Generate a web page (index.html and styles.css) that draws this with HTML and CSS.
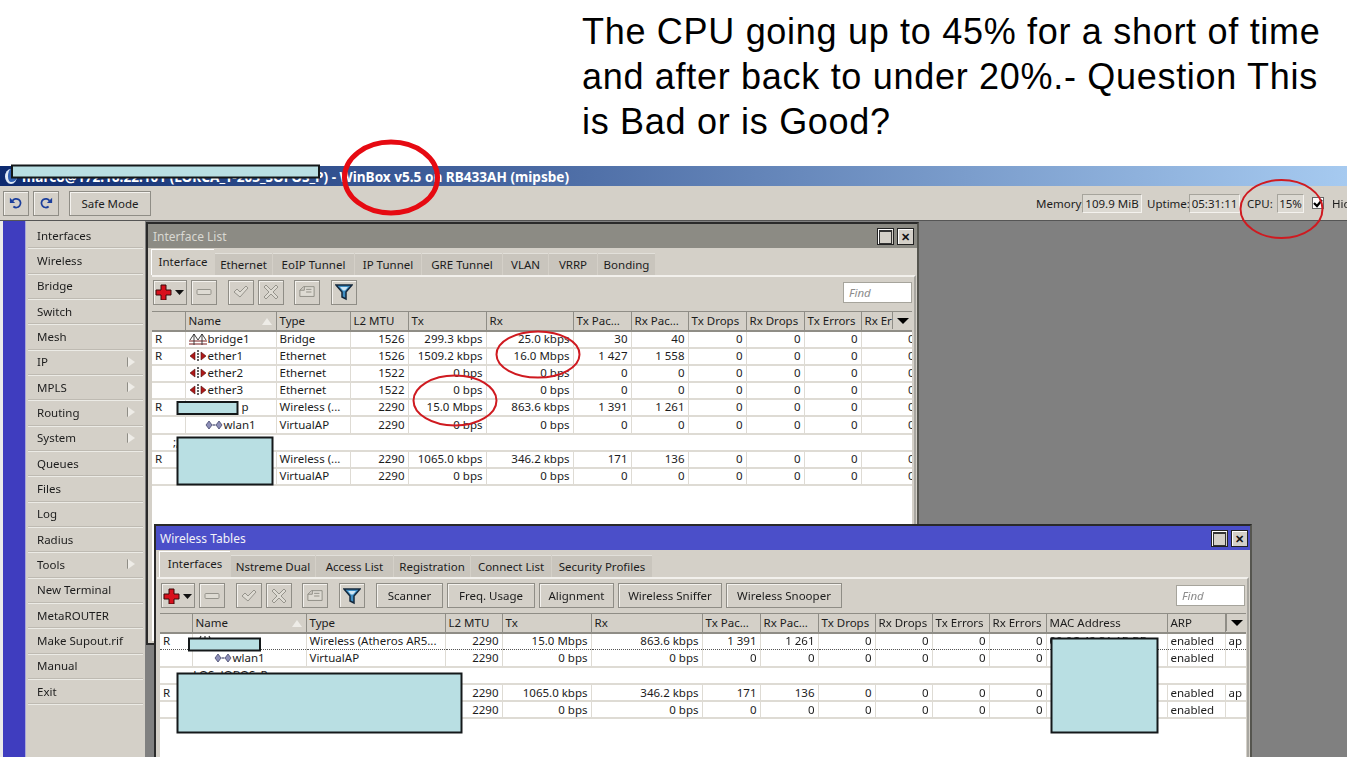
FILE: index.html
```html
<!DOCTYPE html>
<html lang="en">
<head>
    <meta charset="UTF-8">
    <title>WinBox v5.5</title>
    <link rel="stylesheet" href="styles.css">
</head>
<body>
    <svg class="defs" width="0" height="0">
        <symbol id="i-add" viewBox="0 0 30 16">
            <path d="M6 1h5v5h5v5h-5v5H6v-5H1V6h5z" fill="#d8101c" stroke="#3a0a0a" stroke-width="1"/>
            <path d="M20 6h9l-4.500 5z" fill="#111"/>
        </symbol>
        <symbol id="i-minus" viewBox="0 0 16 16">
            <rect x="1" y="5.500" width="14" height="5" rx="1" fill="#dedbd3" stroke="#96948c"/>
        </symbol>
        <symbol id="i-check" viewBox="0 0 16 16">
            <path d="M1 8l3-3 3 3 6-6 2 2-8 9z" fill="#dedbd3" stroke="#96948c"/>
        </symbol>
        <symbol id="i-x" viewBox="0 0 16 16">
            <path d="M3 1l5 5 5-5 2 2-5 5 5 5-2 2-5-5-5 5-2-2 5-5-5-5z" fill="#dedbd3" stroke="#96948c"/>
        </symbol>
        <symbol id="i-note" viewBox="0 0 18 16">
            <path d="M1 6l4-4h12v11H1zM1 6h5V2M8 5h6M8 8h6" fill="#dedbd3" stroke="#8a8880"/>
        </symbol>
        <symbol id="i-filter" viewBox="0 0 18 18">
            <path d="M1 2h16l-6 7v7l-4-2V9z" fill="#3f8fc4" stroke="#14283c" stroke-width="1.500"/>
            <path d="M5 4h8l-3 3.500H8z" fill="#cfe6f5"/>
        </symbol>
        <symbol id="i-undo" viewBox="0 0 16 16">
            <path d="M4 5.500a5 5 0 1 1 1 6.500" fill="none" stroke="#1c3f9c" stroke-width="2"/>
            <path d="M1 2v6h6z" fill="#1c3f9c"/>
        </symbol>
        <symbol id="i-redo" viewBox="0 0 16 16">
            <path d="M12 5.500a5 5 0 1 0-1 6.500" fill="none" stroke="#1c3f9c" stroke-width="2"/>
            <path d="M15 2v6H9z" fill="#1c3f9c"/>
        </symbol>
        <symbol id="i-bridge" viewBox="0 0 18 12">
            <path d="M0 8h18M0 11h18" fill="none" stroke="#7a1c1c" stroke-width="1.200"/>
            <path d="M5 1v11M13 1v11M1 7l4-6 4 6 4-6 4 6" fill="none" stroke="#2a2a2a" stroke-width=".9"/>
        </symbol>
        <symbol id="i-ether" viewBox="0 0 18 12">
            <path d="M6 2v8L1 6zM12 2v8l5-4z" fill="#b01818" stroke="#4a1010" stroke-width=".6"/>
            <path d="M9 0v12" stroke="#222" stroke-width="1.400" stroke-dasharray="2 1"/>
        </symbol>
        <symbol id="i-wlan" viewBox="0 0 18 12">
            <path d="M4 2l3 4-3 4-3-4zM14 2l3 4-3 4-3-4z" fill="#8d8fb8" stroke="#44466c" stroke-width=".8"/>
            <path d="M7.500 6h3" stroke="#44466c" stroke-width="1.200"/>
        </symbol>
        <symbol id="i-wifi" viewBox="0 0 18 12">
            <path d="M9 1v11M5 1l-2 4 2 4M13 1l2 4-2 4" fill="none" stroke="#333" stroke-width="1.200"/>
        </symbol>
        <symbol id="i-tick" viewBox="0 0 10 10">
            <path d="M1 5l3 3 5-6" fill="none" stroke="#000" stroke-width="2.200"/>
        </symbol>
    </svg>

    <p class="note">The CPU going up to 45% for a short of time<br>and after back to under 20%.- Question This<br>is Bad or is Good?</p>

    <div class="app">
        <div class="titlebar">
            <span class="app-logo"></span>
            <span>marco@172.16.22.101 (LORCA_T-203_SOFOS_P) - WinBox v5.5 on RB433AH (mipsbe)</span>
        </div>

        <div class="topbar">
            <button class="btn btn-icon"><svg class="ico-14"><use href="#i-undo"/></svg></button>
            <button class="btn btn-icon"><svg class="ico-14"><use href="#i-redo"/></svg></button>
            <button class="btn btn-safe">Safe Mode</button>
            <div class="status">
                <span class="label-mem">Memory:</span><span class="field field-mem">109.9 MiB</span>
                <span class="label-up">Uptime:</span><span class="field field-up">05:31:11</span>
                <span class="label-cpu">CPU:</span><span class="field field-cpu">15%</span>
                <span class="checkbox"><svg class="ico-tick"><use href="#i-tick"/></svg></span>
                <span class="hide-menu">Hide Menu</span>
            </div>
        </div>

        <div class="main">
            <div class="strip"></div>
            <ul class="menu">
                <li>Interfaces</li>
                <li>Wireless</li>
                <li>Bridge</li>
                <li>Switch</li>
                <li>Mesh</li>
                <li class="more">IP</li>
                <li class="more">MPLS</li>
                <li class="more">Routing</li>
                <li class="more">System</li>
                <li>Queues</li>
                <li>Files</li>
                <li>Log</li>
                <li>Radius</li>
                <li class="more">Tools</li>
                <li>New Terminal</li>
                <li>MetaROUTER</li>
                <li>Make Supout.rif</li>
                <li>Manual</li>
                <li>Exit</li>
            </ul>

            <div class="desktop">
                <!-- Interface List window -->
                <section class="window win-iface">
                    <header class="win-title">
                        <span>Interface List</span>
                        <span class="win-btns"><span class="win-btn win-max"></span><span class="win-btn win-close">&#10005;</span></span>
                    </header>
                    <div class="tabs tabs-iface">
                        <span class="tab active">Interface</span>
                        <span class="tab">Ethernet</span>
                        <span class="tab">EoIP Tunnel</span>
                        <span class="tab">IP Tunnel</span>
                        <span class="tab">GRE Tunnel</span>
                        <span class="tab">VLAN</span>
                        <span class="tab">VRRP</span>
                        <span class="tab">Bonding</span>
                    </div>
                    <div class="panel">
                        <div class="tools">
                            <button class="btn tool tool-add"><svg class="ico-add"><use href="#i-add"/></svg></button>
                            <button class="btn tool"><svg class="ico-16"><use href="#i-minus"/></svg></button>
                            <button class="btn tool group"><svg class="ico-16"><use href="#i-check"/></svg></button>
                            <button class="btn tool"><svg class="ico-16"><use href="#i-x"/></svg></button>
                            <button class="btn tool group-s"><svg class="ico-16"><use href="#i-note"/></svg></button>
                            <button class="btn tool group"><svg class="ico-18"><use href="#i-filter"/></svg></button>
                            <span class="find">Find</span>
                        </div>
                        <div class="grid-wrap">
                            <span class="col-menu"></span>
                            <table class="grid">
                                <colgroup>
                                    <col class="w33"><col class="w91"><col class="w74"><col class="w58"><col class="w78"><col class="w87"><col class="w58"><col class="w57"><col class="w58"><col class="w58"><col class="w57"><col class="w57">
                                </colgroup>
                                <thead>
                                    <tr><th></th><th class="sorted">Name</th><th>Type</th><th>L2 MTU</th><th>Tx</th><th>Rx</th><th>Tx Pac...</th><th>Rx Pac...</th><th>Tx Drops</th><th>Rx Drops</th><th>Tx Errors</th><th>Rx Errors</th></tr>
                                </thead>
                                <tbody>
                                    <tr><td>R</td><td><svg class="ico-row"><use href="#i-bridge"/></svg>bridge1</td><td>Bridge</td><td class="n">1526</td><td class="n">299.3 kbps</td><td class="n">25.0 kbps</td><td class="n">30</td><td class="n">40</td><td class="n">0</td><td class="n">0</td><td class="n">0</td><td class="n">0</td></tr>
                                    <tr><td>R</td><td><svg class="ico-row"><use href="#i-ether"/></svg>ether1</td><td>Ethernet</td><td class="n">1526</td><td class="n">1509.2 kbps</td><td class="n">16.0 Mbps</td><td class="n">1 427</td><td class="n">1 558</td><td class="n">0</td><td class="n">0</td><td class="n">0</td><td class="n">0</td></tr>
                                    <tr><td></td><td><svg class="ico-row"><use href="#i-ether"/></svg>ether2</td><td>Ethernet</td><td class="n">1522</td><td class="n">0 bps</td><td class="n">0 bps</td><td class="n">0</td><td class="n">0</td><td class="n">0</td><td class="n">0</td><td class="n">0</td><td class="n">0</td></tr>
                                    <tr><td></td><td><svg class="ico-row"><use href="#i-ether"/></svg>ether3</td><td>Ethernet</td><td class="n">1522</td><td class="n">0 bps</td><td class="n">0 bps</td><td class="n">0</td><td class="n">0</td><td class="n">0</td><td class="n">0</td><td class="n">0</td><td class="n">0</td></tr>
                                    <tr><td>R</td><td><svg class="ico-row"><use href="#i-wifi"/></svg><span class="name-tail">p</span></td><td>Wireless (...</td><td class="n">2290</td><td class="n">15.0 Mbps</td><td class="n">863.6 kbps</td><td class="n">1 391</td><td class="n">1 261</td><td class="n">0</td><td class="n">0</td><td class="n">0</td><td class="n">0</td></tr>
                                    <tr><td></td><td class="indent"><svg class="ico-row"><use href="#i-wlan"/></svg>wlan1</td><td>VirtualAP</td><td class="n">2290</td><td class="n">0 bps</td><td class="n">0 bps</td><td class="n">0</td><td class="n">0</td><td class="n">0</td><td class="n">0</td><td class="n">0</td><td class="n">0</td></tr>
                                    <tr class="comment"><td colspan="12">;;; LOS_JOBOS_R</td></tr>
                                    <tr><td>R</td><td></td><td>Wireless (...</td><td class="n">2290</td><td class="n">1065.0 kbps</td><td class="n">346.2 kbps</td><td class="n">171</td><td class="n">136</td><td class="n">0</td><td class="n">0</td><td class="n">0</td><td class="n">0</td></tr>
                                    <tr><td></td><td></td><td>VirtualAP</td><td class="n">2290</td><td class="n">0 bps</td><td class="n">0 bps</td><td class="n">0</td><td class="n">0</td><td class="n">0</td><td class="n">0</td><td class="n">0</td><td class="n">0</td></tr>
                                </tbody>
                            </table>
                        </div>
                    </div>
                </section>

                <!-- Wireless Tables window -->
                <section class="window win-wireless">
                    <header class="win-title">
                        <span>Wireless Tables</span>
                        <span class="win-btns"><span class="win-btn win-max"></span><span class="win-btn win-close">&#10005;</span></span>
                    </header>
                    <div class="tabs tabs-wireless">
                        <span class="tab active">Interfaces</span>
                        <span class="tab">Nstreme Dual</span>
                        <span class="tab">Access List</span>
                        <span class="tab">Registration</span>
                        <span class="tab">Connect List</span>
                        <span class="tab">Security Profiles</span>
                    </div>
                    <div class="panel">
                        <div class="tools">
                            <button class="btn tool tool-add"><svg class="ico-add"><use href="#i-add"/></svg></button>
                            <button class="btn tool"><svg class="ico-16"><use href="#i-minus"/></svg></button>
                            <button class="btn tool group"><svg class="ico-16"><use href="#i-check"/></svg></button>
                            <button class="btn tool"><svg class="ico-16"><use href="#i-x"/></svg></button>
                            <button class="btn tool group-s"><svg class="ico-16"><use href="#i-note"/></svg></button>
                            <button class="btn tool group"><svg class="ico-18"><use href="#i-filter"/></svg></button>
                            <button class="btn btn-text w-scan group">Scanner</button>
                            <button class="btn btn-text w-freq">Freq. Usage</button>
                            <button class="btn btn-text w-align">Alignment</button>
                            <button class="btn btn-text w-sniff">Wireless Sniffer</button>
                            <button class="btn btn-text w-snoop">Wireless Snooper</button>
                            <span class="find">Find</span>
                        </div>
                        <div class="grid-wrap">
                            <span class="col-menu"></span>
                            <table class="grid">
                                <colgroup>
                                    <col class="w32"><col class="w114"><col class="w139"><col class="w57"><col class="w89"><col class="w111"><col class="w58"><col class="w58"><col class="w57"><col class="w57"><col class="w57"><col class="w57"><col class="w121"><col class="w58"><col class="w21">
                                </colgroup>
                                <thead>
                                    <tr><th></th><th class="sorted">Name</th><th>Type</th><th>L2 MTU</th><th>Tx</th><th>Rx</th><th>Tx Pac...</th><th>Rx Pac...</th><th>Tx Drops</th><th>Rx Drops</th><th>Tx Errors</th><th>Rx Errors</th><th>MAC Address</th><th>ARP</th><th></th></tr>
                                </thead>
                                <tbody>
                                    <tr class="selected"><td>R</td><td><svg class="ico-row"><use href="#i-wifi"/></svg></td><td>Wireless (Atheros AR5...</td><td class="n">2290</td><td class="n">15.0 Mbps</td><td class="n">863.6 kbps</td><td class="n">1 391</td><td class="n">1 261</td><td class="n">0</td><td class="n">0</td><td class="n">0</td><td class="n">0</td><td>00:0C:42:31:1B:BD</td><td>enabled</td><td>ap</td></tr>
                                    <tr><td></td><td class="indent"><svg class="ico-row"><use href="#i-wlan"/></svg>wlan1</td><td>VirtualAP</td><td class="n">2290</td><td class="n">0 bps</td><td class="n">0 bps</td><td class="n">0</td><td class="n">0</td><td class="n">0</td><td class="n">0</td><td class="n">0</td><td class="n">0</td><td></td><td>enabled</td><td></td></tr>
                                    <tr class="comment"><td colspan="15">;;; LOS_JOBOS_R</td></tr>
                                    <tr><td>R</td><td></td><td></td><td class="n">2290</td><td class="n">1065.0 kbps</td><td class="n">346.2 kbps</td><td class="n">171</td><td class="n">136</td><td class="n">0</td><td class="n">0</td><td class="n">0</td><td class="n">0</td><td></td><td>enabled</td><td>ap</td></tr>
                                    <tr><td></td><td></td><td></td><td class="n">2290</td><td class="n">0 bps</td><td class="n">0 bps</td><td class="n">0</td><td class="n">0</td><td class="n">0</td><td class="n">0</td><td class="n">0</td><td class="n">0</td><td></td><td>enabled</td><td></td></tr>
                                </tbody>
                            </table>
                        </div>
                    </div>
                </section>
            </div>
        </div>
    </div>

    <!-- hand drawn marks over the screenshot -->
    <svg class="marks" viewBox="0 0 1347 757">
        <rect class="mask" x="12" y="165.500" width="307" height="12"/>
        <rect class="mask" x="177.500" y="402" width="60" height="12"/>
        <rect class="mask" x="177.500" y="437.500" width="95" height="47"/>
        <rect class="mask" x="189" y="638.500" width="71" height="12"/>
        <rect class="mask" x="177.500" y="673.500" width="284" height="59"/>
        <rect class="mask" x="1051.500" y="638.500" width="106" height="94"/>
        <ellipse class="ring ring-thick" cx="391" cy="177.500" rx="46.500" ry="35.500"/>
        <ellipse class="ring" cx="1281.500" cy="209" rx="41" ry="29"/>
        <ellipse class="ring" cx="538" cy="354.500" rx="41.500" ry="23"/>
        <ellipse class="ring" cx="455" cy="400.500" rx="41.500" ry="25"/>
    </svg>
</body>
</html>
```

FILE: styles.css
```css
* {
    box-sizing: border-box;
}

html, body {
    margin: 0;
    height: 757px;
    overflow: hidden;
    background: #ffffff;
}

body {
    position: relative;
    font-family: 'Noto Sans', 'Liberation Sans', sans-serif;
    font-size: 11.5px;
    color: #1c1c1c;
}

.defs {
    position: absolute;
}

.note {
    height: 166px;
    margin: 0;
    padding: 9px 0 0 582px;
    font-family: 'Liberation Sans', Arial, sans-serif;
    font-size: 36px;
    letter-spacing: 0.7px;
    line-height: 45px;
    color: #000000;
    white-space: nowrap;
}

.app {
    height: 591px;
    display: flex;
    flex-direction: column;
    filter: blur(0.35px);
}

.titlebar {
    height: 20px;
    display: flex;
    align-items: center;
    gap: 5px;
    padding-left: 5px;
    background: linear-gradient(to right, #0d2a70, #a6caf0);
    color: #ffffff;
    font-size: 13.6px;
    font-weight: bold;
    white-space: nowrap;
}

.app-logo {
    width: 12px;
    height: 15px;
    border-radius: 50%;
    background: #2f5fb0;
    border-left: 3px solid #dfe9f6;
    border-bottom: 2px solid #dfe9f6;
}

.topbar {
    height: 35px;
    flex: none;
    display: flex;
    align-items: center;
    padding-left: 3px;
    background: #d4d0c8;
    border-bottom: 1px solid #555555;
    white-space: nowrap;
}

.btn {
    height: 25px;
    padding: 0;
    display: inline-flex;
    align-items: center;
    justify-content: center;
    font: inherit;
    color: inherit;
    background: #d4d0c8;
    border: 1px solid #8f8d86;
    box-shadow: inset 1px 1px 0 #f4f2ee;
}

.btn-icon {
    width: 26px;
    margin-right: 4px;
}

.btn-safe {
    width: 82px;
    margin-left: 6px;
}

.status {
    margin-left: auto;
    width: 311px;
    flex: none;
    display: flex;
    align-items: center;
}

.label-mem { width: 46px; flex: none; }
.label-up { width: 41px; flex: none; margin-left: 5px; }
.label-cpu { width: 29px; flex: none; margin-left: 7px; }

.field {
    height: 19px;
    flex: none;
    display: flex;
    align-items: center;
    justify-content: center;
    background: #dcd9d2;
    border: 1px solid #a6a49c;
    border-right-color: #f4f2ee;
    border-bottom-color: #f4f2ee;
}

.field-mem { width: 60px; }
.field-up { width: 51px; margin-left: 1px; }
.field-cpu { width: 27px; margin-left: 1px; }

.checkbox {
    width: 12px;
    height: 12px;
    flex: none;
    margin: 0 8px;
    display: flex;
    align-items: center;
    justify-content: center;
    background: #ffffff;
    border: 1px solid #666666;
}

.ico-tick {
    width: 10px;
    height: 10px;
}

.hide-menu {
    flex: none;
}

.main {
    flex: 1;
    display: flex;
    min-height: 0;
}

.strip {
    width: 26px;
    flex: none;
    background: #3f3dbf;
    border-left: 3px solid #ecebea;
    border-right: 1px solid #a8a6d8;
}

.menu {
    width: 119px;
    flex: none;
    margin: 0;
    padding: 2px 0 0;
    list-style: none;
    background: #d4d0c8;
}

.menu li {
    position: relative;
    height: 25.33px;
    margin-left: 2px;
    margin-right: 2px;
    padding-left: 9px;
    display: flex;
    align-items: center;
    border-bottom: 1px solid #bebab2;
    box-shadow: 0 1px 0 #ecebe6;
}

.menu .more::after {
    content: "";
    position: absolute;
    right: 8px;
    top: 7px;
    border-left: 7px solid #eeece7;
    border-top: 5px solid transparent;
    border-bottom: 5px solid transparent;
    filter: drop-shadow(-1px 0 0 #8f8d86);
}

.desktop {
    position: relative;
    flex: 1;
    overflow: hidden;
    background: #808080;
}

.window {
    position: absolute;
    background: #d4d0c8;
    border: 2px solid #2a2a2a;
    border-right-color: #55554f;
    border-bottom-color: #2a2a2a;
}

.win-iface {
    left: 1px;
    top: 1px;
    width: 773px;
    height: 423px;
}

.win-iface .win-title {
    background: #8c8b84;
    color: #d9d8d2;
}

.win-wireless {
    left: 9px;
    top: 303px;
    width: 1098px;
    height: 260px;
}

.win-wireless .win-title {
    background: #4b4fc9;
    color: #f2f2f8;
    padding-left: 4px;
    padding-right: 2px;
}

.win-title {
    height: 24px;
    display: flex;
    align-items: center;
    justify-content: space-between;
    padding: 1px 3px 0 5px;
    font-size: 12px;
}

.win-btns {
    display: flex;
    gap: 3px;
}

.win-btn {
    width: 17px;
    height: 17px;
    display: flex;
    align-items: center;
    justify-content: center;
    background: #d4d0c8;
    border: 1px solid #222222;
    box-shadow: inset 1px 1px 0 #ffffff;
    font-size: 11px;
    font-weight: bold;
    line-height: 1;
    color: #111111;
}

.win-max::before {
    content: "";
    width: 11px;
    height: 11px;
    border: 1px solid #333333;
    border-top-width: 2px;
}

.tabs {
    height: 27px;
    display: grid;
    align-items: end;
    padding-left: 3px;
}

.tabs-iface {
    grid-template-columns: 64px 58px 82px 67px 81px 46px 49px 58px;
}

.tabs-wireless {
    grid-template-columns: 72px 85px 78px 77px 81px 101px;
}

.tab {
    height: 22px;
    display: flex;
    align-items: center;
    justify-content: center;
    margin-right: 1px;
    background: #c9c5bd;
    border-top: 1px solid #e2e0da;
    white-space: nowrap;
}

.tab.active {
    height: 26px;
    padding-bottom: 2px;
    background: #d4d0c8;
    border-top: 1px solid #ffffff;
    border-left: 1px solid #ffffff;
}

.panel {
    height: calc(100% - 51px);
    margin: 0 1px 0 4px;
    border-top: 2px solid #f2f0ec;
    border-right: 2px solid #a8a6a0;
}

.win-wireless .panel {
    margin-left: 1px;
}

.tools {
    height: 34px;
    display: flex;
    align-items: center;
    gap: 4px;
    padding: 0 2px 4px 1px;
}

.win-wireless .tools {
    padding: 2px 2px 3px 4px;
}

.tool {
    width: 26px;
}

.tool-add {
    width: 34px;
}

.group {
    margin-left: 7px;
}

.group-s {
    margin-left: 6px;
}

.btn-text {
    flex: none;
}

.w-scan { width: 67px; }
.w-freq { width: 88px; }
.w-align { width: 75px; }
.w-sniff { width: 104px; }
.w-snoop { width: 116px; }

.find {
    width: 69px;
    height: 21px;
    margin-left: auto;
    padding-left: 5px;
    display: flex;
    align-items: center;
    background: #ffffff;
    border: 1px solid #a6a49c;
    color: #8c8c8c;
    font-style: italic;
}

.grid-wrap {
    position: relative;
    height: 330px;
    overflow: hidden;
    background: #ffffff;
    margin-right: 2px;
}

.win-wireless .grid-wrap {
    margin: 0 1px 0 3px;
}

.col-menu {
    position: absolute;
    right: 0;
    top: 1px;
    width: 20px;
    height: 17px;
    display: flex;
    align-items: center;
    justify-content: center;
    background: #d4d0c8;
    border-left: 1px solid #8f8d86;
    z-index: 1;
}

.col-menu::before {
    content: "";
    border-left: 6px solid transparent;
    border-right: 6px solid transparent;
    border-top: 6px solid #000000;
}

.grid {
    table-layout: fixed;
    width: max-content;
    border-collapse: collapse;
}

.grid th {
    height: 19px;
    padding: 0 3px;
    line-height: 14px;
    text-align: left;
    font-weight: normal;
    background: #d4d0c8;
    border-top: 1px solid #8f8d86;
    border-bottom: 2px solid #8f8d86;
    border-right: 1px solid #8f8d86;
    overflow: hidden;
    white-space: nowrap;
}

.grid th.sorted {
    position: relative;
}

.grid th.sorted::after {
    content: "";
    position: absolute;
    right: 4px;
    top: 6px;
    border-left: 5px solid transparent;
    border-right: 5px solid transparent;
    border-bottom: 7px solid #eeece7;
}

.grid td {
    height: 17.2px;
    padding: 0 3px 1px;
    line-height: 14px;
    border-right: 1px solid #dedbd4;
    border-bottom: 2px solid #dedbd4;
    overflow: hidden;
    white-space: nowrap;
}

.win-wireless .grid td {
    padding-bottom: 0;
}

.grid td.n {
    text-align: right;
}

.grid td.indent {
    padding-left: 19px;
}

.win-wireless .grid td.indent {
    padding-left: 21px;
}

.grid .comment td {
    padding-left: 21px;
    border-right: 0;
}

.grid .selected td {
    border-bottom: 1px dotted #555555;
}

.name-tail {
    margin-left: 34px;
}

.ico-14 {
    width: 14px;
    height: 14px;
}

.ico-16 {
    width: 16px;
    height: 16px;
}

.ico-18 {
    width: 18px;
    height: 18px;
}

.ico-add {
    width: 30px;
    height: 16px;
}

.ico-row {
    width: 18px;
    height: 12px;
    margin-right: 1px;
    vertical-align: -2px;
}

.w21 { width: 21px; }
.w32 { width: 32px; }
.w33 { width: 33px; }
.w57 { width: 57px; }
.w58 { width: 58px; }
.w74 { width: 74px; }
.w78 { width: 78px; }
.w87 { width: 87px; }
.w89 { width: 89px; }
.w91 { width: 91px; }
.w111 { width: 111px; }
.w114 { width: 114px; }
.w121 { width: 121px; }
.w139 { width: 139px; }

.marks {
    position: absolute;
    left: 0;
    top: 0;
    width: 1347px;
    height: 757px;
    pointer-events: none;
}

.mask {
    fill: #b9dfe3;
    stroke: #14181a;
    stroke-width: 2;
}

.ring {
    fill: none;
    stroke: #cf1a20;
    stroke-width: 2;
}

.ring-thick {
    stroke: #e60a12;
    stroke-width: 5;
}
```
